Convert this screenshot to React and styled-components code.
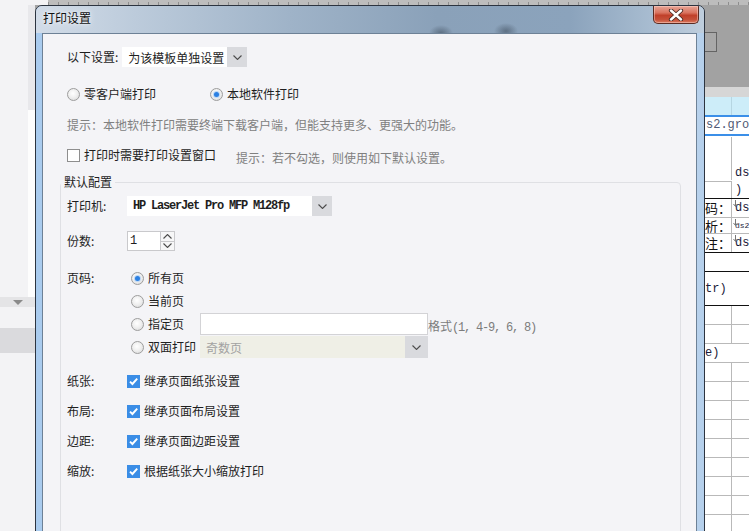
import styled, { createGlobalStyle } from "styled-components";

const GlobalStyle = createGlobalStyle`
  html, body { margin: 0; padding: 0; }
  body {
    width: 749px;
    height: 531px;
    overflow: hidden;
    background: #f3f3f5;
    font-family: "Noto Sans CJK SC", "Noto Sans", sans-serif;
    font-size: 12px;
    color: #1e1e1e;
  }
`;

const Screen = styled.div`
  position: relative;
  width: 749px;
  height: 531px;
  overflow: hidden;
  display: flex;
  flex-direction: column;
`;

/* ---------- background application ---------- */
const RulerRow = styled.div`
  flex: none;
  height: 5px;
  display: flex;
`;
const RulerBlank = styled.div`
  width: 48px;
  background: #f3f3f5;
`;
const Ruler = styled.div`
  flex: 1;
  background:
    repeating-linear-gradient(90deg, #8e8e8e 0 1px, transparent 1px 10px) 0 2px / 100% 3px no-repeat,
    #bdbdbd;
`;
const Workspace = styled.div`
  flex: 1;
  display: flex;
  min-height: 0;
`;
const LeftPane = styled.div`
  width: 35px;
  flex: none;
  display: flex;
  flex-direction: column;
  background: #f3f3f5;
`;
const SideBlock = styled.div`
  height: ${(p) => p.$h}px;
  flex: none;
  display: flex;
`;
const SidePanel = styled.div`
  width: 28px;
  background: #f3f3f5;
`;
const SideStripe = styled.div`
  flex: 1;
  background: ${(p) => p.$bg};
`;
const CollapseBar = styled.div`
  height: 10px;
  flex: none;
  background: #e4e4e6;
  display: flex;
  align-items: center;
  justify-content: center;
  padding-left: 1px;
`;
const Triangle = styled.span`
  width: 0;
  height: 0;
  border-left: 5px solid transparent;
  border-right: 5px solid transparent;
  border-top: 5px solid #8a8a8a;
`;
const GreyBlock = styled.div`
  height: ${(p) => p.$h}px;
  flex: none;
  background: ${(p) => p.$bg};
`;
const Middle = styled.div`
  flex: 1;
  background: #a3a3a3;
`;
const RightPane = styled.div`
  width: 44px;
  flex: none;
  display: flex;
  flex-direction: column;
  background: #fff;
  overflow: hidden;
`;
const ToolStrip = styled.div`
  height: 82px;
  flex: none;
  background: #a2a2a2;
  padding-top: 27px;
  box-sizing: border-box;
`;
const ToolButton = styled.div`
  width: 12px;
  height: 20px;
  box-sizing: border-box;
  border: 1px solid #646464;
  border-left: none;
  background: #a8a8a8;
`;
const Band = styled.div`
  height: ${(p) => p.$h}px;
  flex: none;
  background: ${(p) => p.$bg};
  display: flex;
`;
const HeaderCell = styled.div`
  width: 26px;
  border-right: 1px solid #b6d6e2;
`;
const FieldName = styled.div`
  height: 17px;
  flex: none;
  padding-left: 1px;
  font-family: "Liberation Mono", monospace;
  font-size: 12px;
  line-height: 17px;
  color: #505a74;
  white-space: nowrap;
  overflow: hidden;
`;
const SheetRow = styled.div`
  height: ${(p) => p.$h}px;
  flex: none;
  display: flex;
  box-sizing: border-box;
  border-top: 1px solid ${(p) => p.$line || "transparent"};
`;
const SheetCell = styled.div`
  width: ${(p) => (p.$w ? `${p.$w}px` : "auto")};
  flex: ${(p) => (p.$w ? "none" : 1)};
  box-sizing: border-box;
  border-right: ${(p) => (p.$divider ? "1px solid #b9b9b9" : "none")};
  border-top: ${(p) => (p.$top ? `1px solid ${p.$top}` : "none")};
  display: flex;
  align-items: ${(p) => p.$align || "center"};
  justify-content: ${(p) => p.$justify || "flex-start"};
  white-space: nowrap;
  overflow: hidden;
  position: relative;
`;
const CellLabel = styled.span`
  font-size: 13px;
  line-height: 14px;
  color: #111;
  flex: none;
`;
const CellCode = styled.span`
  font-family: "Liberation Mono", monospace;
  font-size: ${(p) => p.$size || 12}px;
  color: ${(p) => p.$color || "#1b1b3a"};
  padding-left: ${(p) => p.$pad ?? 3}px;
  line-height: 14px;
`;
const Marker = styled.svg`
  position: absolute;
  left: 1px;
  top: 1px;
`;

/* ---------- dialog window ---------- */
const Window = styled.div`
  position: absolute;
  left: 35px;
  top: 5px;
  width: 670px;
  height: 540px;
  box-sizing: border-box;
  border: 1px solid #2c3440;
  border-radius: 7px 7px 0 0;
  background: linear-gradient(90deg, #a9cbee 0%, #bcd5ef 50%, #c4daf1 96%, #b4cfeb 100%);
  display: flex;
  flex-direction: column;
  overflow: hidden;
`;
const TitleBar = styled.div`
  height: 27px;
  flex: none;
  display: flex;
  align-items: flex-start;
  justify-content: space-between;
  background:
    radial-gradient(ellipse 12px 8px at 405px 27px, rgba(40, 52, 66, 0.45), transparent),
    radial-gradient(ellipse 12px 8px at 470px 25px, rgba(40, 52, 66, 0.45), transparent),
    linear-gradient(90deg, #d2dce8 0%, #bccbdb 15%, #9fb3c8 38%, #8aa1b9 60%, #8ba3bc 80%, #aabed2 93%, #bfcedd 100%);
`;
const Title = styled.div`
  margin: 4px 0 0 7px;
  line-height: 16px;
  font-size: 12px;
  color: #111;
  text-shadow: 0 0 6px rgba(255, 255, 255, 0.9), 0 0 3px rgba(255, 255, 255, 0.7);
`;
const CloseButton = styled.div`
  width: 46px;
  height: 18px;
  margin-right: 5px;
  box-sizing: border-box;
  border: 1px solid #5a2b22;
  border-top: none;
  border-radius: 0 0 5px 5px;
  background: linear-gradient(180deg, #e7a596 0%, #d9735f 40%, #c0402a 55%, #c5513a 80%, #dc7a5e 100%);
  box-shadow: inset 0 0 0 1px rgba(255, 220, 210, 0.45);
  display: flex;
  align-items: center;
  justify-content: center;
`;
const FrameBody = styled.div`
  flex: 1;
  display: flex;
  padding: 0 7px 0 6px;
  min-height: 0;
`;
const Content = styled.div`
  flex: 1;
  border: 1px solid #6d8196;
  border-bottom: none;
  background: #f4f4f7;
  padding: 13px 0 0 24px;
  display: flex;
  flex-direction: column;
  overflow: hidden;
`;

const Row = styled.div`
  height: ${(p) => p.$h || 20}px;
  margin-top: ${(p) => p.$mt || 0}px;
  flex: none;
  display: flex;
  align-items: center;
`;
const Text = styled.span`
  color: ${(p) => p.$color || "#1e1e1e"};
  white-space: nowrap;
  line-height: 16px;
`;
const Hint = styled.div`
  height: 20px;
  margin-top: ${(p) => p.$mt || 0}px;
  line-height: 20px;
  color: #808080;
  white-space: nowrap;
`;
const InlineHint = styled.span`
  color: #808080;
  margin-left: 20px;
  margin-top: 5px;
  white-space: nowrap;
`;
const Option = styled.div`
  width: ${(p) => (p.$w ? `${p.$w}px` : "auto")};
  flex: none;
  display: flex;
  align-items: center;
  gap: 4px;
`;
const Radio = styled.span`
  width: 13px;
  height: 13px;
  box-sizing: border-box;
  border-radius: 50%;
  border: 1px solid #9d9d9d;
  background: radial-gradient(circle at 45% 40%, #ffffff 0%, #f0f0f0 45%, #d6d6d6 100%);
  display: inline-flex;
  align-items: center;
  justify-content: center;
  flex: none;
  &::after {
    content: "";
    display: ${(p) => (p.$checked ? "block" : "none")};
    width: 5px;
    height: 5px;
    border-radius: 50%;
    background: #2c80e2;
    box-shadow: 0 0 0 1px #bcd7f5;
  }
`;
const Checkbox = styled.span`
  width: 13px;
  height: 13px;
  box-sizing: border-box;
  flex: none;
  border: 1px solid ${(p) => (p.$checked ? "#3a8de6" : "#8e8e8e")};
  background: ${(p) => (p.$checked ? "#3a8de6" : "#ffffff")};
  display: inline-flex;
  align-items: center;
  justify-content: center;
`;

const Select = styled.div`
  width: ${(p) => p.$w}px;
  height: ${(p) => p.$h || 20}px;
  margin-left: ${(p) => p.$ml || 0}px;
  flex: none;
  display: flex;
  box-sizing: border-box;
  background: ${(p) => (p.$disabled ? "#efefe6" : "#ffffff")};
`;
const SelectValue = styled.div`
  flex: 1;
  padding-left: 6px;
  display: flex;
  align-items: center;
  white-space: nowrap;
  color: ${(p) => (p.$disabled ? "#a2a2a2" : "#1e1e1e")};
`;
const SelectArrow = styled.div`
  width: ${(p) => p.$w || 20}px;
  flex: none;
  background: #d9dade;
  display: flex;
  align-items: center;
  justify-content: center;
`;
const Mono = styled.span`
  font-family: "Liberation Mono", monospace;
  font-size: 12px;
  letter-spacing: -1.2px;
  color: ${(p) => p.$color || "#1e1e1e"};
  font-weight: ${(p) => (p.$bold ? 600 : 400)};
`;

const Group = styled.fieldset`
  margin: 9px 15px 0 -7px;
  padding: 0;
  min-height: 400px;
  border: 1px solid #dfe0e4;
  border-radius: 4px;
  flex: none;
`;
const Legend = styled.legend`
  padding: 0 3px;
  margin: 0;
  line-height: 16px;
  font-size: 12px;
  color: #1e1e1e;
`;
const FieldStack = styled.div`
  padding-left: 6px;
  display: flex;
  flex-direction: column;
`;
const FieldRow = styled.div`
  margin-top: ${(p) => p.$mt || 0}px;
  display: flex;
  align-items: flex-start;
`;
const FieldLabel = styled.div`
  width: 60px;
  flex: none;
  line-height: ${(p) => p.$h || 20}px;
  white-space: nowrap;
`;
const FieldControl = styled.div`
  height: ${(p) => p.$h || 20}px;
  display: flex;
  align-items: center;
  gap: 4px;
`;
const Spinner = styled.div`
  width: 48px;
  height: 20px;
  box-sizing: border-box;
  border: 1px solid #c9c9cc;
  background: #fff;
  display: flex;
`;
const SpinValue = styled.div`
  flex: 1;
  padding-left: 2px;
  display: flex;
  align-items: center;
`;
const SpinButtons = styled.div`
  width: 13px;
  flex: none;
  display: flex;
  flex-direction: column;
  border-left: 1px solid #c9c9cc;
`;
const SpinButton = styled.div`
  flex: 1;
  display: flex;
  align-items: center;
  justify-content: center;
  background: #f7f7f8;
  border-top: ${(p) => (p.$lower ? "1px solid #c9c9cc" : "none")};
`;
const PageList = styled.div`
  margin-left: 4px;
  display: flex;
  flex-direction: column;
  gap: 1px;
`;
const PageOption = styled.div`
  height: 22px;
  display: flex;
  align-items: center;
`;
const PageChoice = styled.div`
  width: 69px;
  flex: none;
  display: flex;
  align-items: center;
  gap: 4px;
`;
const TextBox = styled.div`
  width: 228px;
  height: 22px;
  box-sizing: border-box;
  border: 1px solid #d3d3d6;
  background: #fff;
  flex: none;
`;
const FormatHint = styled.span`
  margin-top: 4px;
  color: #7c7c7c;
  white-space: nowrap;
`;

const Chevron = ({ color = "#4d4d4d", up }) => (
  <svg width="9" height="5" viewBox="0 0 9 5">
    <path
      d={up ? "M0.5 4.5 L4.5 0.5 L8.5 4.5" : "M0.5 0.5 L4.5 4.5 L8.5 0.5"}
      fill="none"
      stroke={color}
      strokeWidth="1.1"
    />
  </svg>
);

const Tick = () => (
  <svg width="11" height="11" viewBox="0 0 11 11">
    <path d="M2 5.6 L4.4 8 L9.2 2.6" fill="none" stroke="#fff" strokeWidth="1.9" />
  </svg>
);

const CloseGlyph = () => (
  <svg width="16" height="12" viewBox="0 0 16 12">
    <path d="M3 1.5 L13 10.5 M13 1.5 L3 10.5" stroke="#4a2a24" strokeWidth="4.2" strokeLinecap="round" />
    <path d="M3 1.5 L13 10.5 M13 1.5 L3 10.5" stroke="#ffffff" strokeWidth="2.4" strokeLinecap="round" />
  </svg>
);

const DownMark = () => (
  <Marker width="5" height="7" viewBox="0 0 5 7">
    <path d="M2.5 0 V6 M0.5 4 L2.5 6.5 L4.5 4" fill="none" stroke="#777" strokeWidth="1" />
  </Marker>
);

const sheetRows = [
  { h: 44, left: null, right: <CellCode>ds</CellCode>, align: "flex-end" },
  { h: 18, leftTop: "#b9b9b9", right: <CellCode>)</CellCode> },
  { h: 19, line: "#111", left: "码：", right: <CellCode>ds</CellCode>, mark: true },
  { h: 16, line: "#b9b9b9", left: "析：", right: <CellCode $size={8}>ds2</CellCode>, mark: true },
  { h: 19, line: "#b9b9b9", left: "注：", right: <CellCode>ds</CellCode>, mark: true },
  { h: 19, line: "#111", merged: "" },
  { h: 34, line: "#111", merged: "tr)" },
  { h: 19, line: "#111" },
  { h: 19, line: "#b9b9b9" },
  { h: 19, line: "#b9b9b9", merged: "e)" },
  ...Array.from({ length: 9 }, () => ({ h: 19, line: "#b9b9b9" })),
];

const checkRows = [
  ["纸张:", "继承页面纸张设置"],
  ["布局:", "继承页面布局设置"],
  ["边距:", "继承页面边距设置"],
  ["缩放:", "根据纸张大小缩放打印"],
];

const pageRows = [
  { label: "所有页", checked: true },
  { label: "当前页" },
  { label: "指定页", input: true },
  { label: "双面打印", select: true },
];

export default function App() {
  return (
    <Screen>
      <GlobalStyle />
      <RulerRow>
        <RulerBlank />
        <Ruler />
      </RulerRow>
      <Workspace>
        <LeftPane>
          <SideBlock $h={105}>
            <SidePanel />
            <SideStripe $bg="#e8e8eb" />
          </SideBlock>
          <SideBlock $h={187}>
            <SidePanel />
            <SideStripe $bg="#fdfdfd" />
          </SideBlock>
          <CollapseBar>
            <Triangle />
          </CollapseBar>
          <GreyBlock $h={21} $bg="#f3f3f5" />
          <GreyBlock $h={25} $bg="#dadadd" />
        </LeftPane>
        <Middle />
        <RightPane>
          <ToolStrip>
            <ToolButton />
          </ToolStrip>
          <Band $h={10} $bg="#d6d6d6" />
          <Band $h={18} $bg="#cdedf9">
            <HeaderCell />
          </Band>
          <Band $h={2} $bg="#3b8fe8" />
          <FieldName>s2.group</FieldName>
          <Band $h={2} $bg="#3b8fe8" />
          {sheetRows.map((r, i) =>
            r.merged !== undefined ? (
              <SheetRow key={i} $h={r.h} $line={r.line}>
                <SheetCell>
                  <CellCode $pad={0} $size={12}>{r.merged}</CellCode>
                </SheetCell>
              </SheetRow>
            ) : (
              <SheetRow key={i} $h={r.h} $line={r.line}>
                <SheetCell $w={27} $divider $justify="flex-end" $top={r.leftTop}>
                  {r.left && <CellLabel>{r.left}</CellLabel>}
                </SheetCell>
                <SheetCell $align={r.align}>
                  {r.mark && <DownMark />}
                  {r.right}
                </SheetCell>
              </SheetRow>
            )
          )}
        </RightPane>
      </Workspace>

      <Window>
        <TitleBar>
          <Title>打印设置</Title>
          <CloseButton>
            <CloseGlyph />
          </CloseButton>
        </TitleBar>
        <FrameBody>
          <Content>
            <Row>
              <Text>以下设置:</Text>
              <Select $w={125} $ml={4}>
                <SelectValue>为该模板单独设置</SelectValue>
                <SelectArrow>
                  <Chevron />
                </SelectArrow>
              </Select>
            </Row>
            <Row $mt={17}>
              <Option $w={143}>
                <Radio />
                <Text>零客户端打印</Text>
              </Option>
              <Option>
                <Radio $checked />
                <Text>本地软件打印</Text>
              </Option>
            </Row>
            <Hint $mt={11}>提示：本地软件打印需要终端下载客户端，但能支持更多、更强大的功能。</Hint>
            <Row $mt={10}>
              <Option>
                <Checkbox />
                <Text>打印时需要打印设置窗口</Text>
              </Option>
              <InlineHint>提示：若不勾选，则使用如下默认设置。</InlineHint>
            </Row>

            <Group>
              <Legend>默认配置</Legend>
              <FieldStack>
                <FieldRow $mt={6}>
                  <FieldLabel>打印机:</FieldLabel>
                  <Select $w={205}>
                    <SelectValue>
                      <Mono $bold>HP LaserJet Pro MFP M128fp</Mono>
                    </SelectValue>
                    <SelectArrow>
                      <Chevron />
                    </SelectArrow>
                  </Select>
                </FieldRow>
                <FieldRow $mt={15}>
                  <FieldLabel>份数:</FieldLabel>
                  <Spinner>
                    <SpinValue>
                      <Mono>1</Mono>
                    </SpinValue>
                    <SpinButtons>
                      <SpinButton>
                        <Chevron up />
                      </SpinButton>
                      <SpinButton $lower>
                        <Chevron />
                      </SpinButton>
                    </SpinButtons>
                  </Spinner>
                </FieldRow>
                <FieldRow $mt={16}>
                  <FieldLabel $h={22}>页码:</FieldLabel>
                  <PageList>
                    {pageRows.map((p) => (
                      <PageOption key={p.label}>
                        <PageChoice>
                          <Radio $checked={p.checked} />
                          <Text>{p.label}</Text>
                        </PageChoice>
                        {p.input && (
                          <>
                            <TextBox />
                            <FormatHint>
                              格式<Mono $color="#7c7c7c">(1, 4-9, 6, 8)</Mono>
                            </FormatHint>
                          </>
                        )}
                        {p.select && (
                          <Select $w={228} $h={22} $disabled>
                            <SelectValue $disabled>奇数页</SelectValue>
                            <SelectArrow $w={23}>
                              <Chevron />
                            </SelectArrow>
                          </Select>
                        )}
                      </PageOption>
                    ))}
                  </PageList>
                </FieldRow>
                {checkRows.map(([label, text], i) => (
                  <FieldRow key={label} $mt={i === 0 ? 8 : 0}>
                    <FieldLabel $h={30}>{label}</FieldLabel>
                    <FieldControl $h={30}>
                      <Checkbox $checked>
                        <Tick />
                      </Checkbox>
                      <Text>{text}</Text>
                    </FieldControl>
                  </FieldRow>
                ))}
              </FieldStack>
            </Group>
          </Content>
        </FrameBody>
      </Window>
    </Screen>
  );
}
